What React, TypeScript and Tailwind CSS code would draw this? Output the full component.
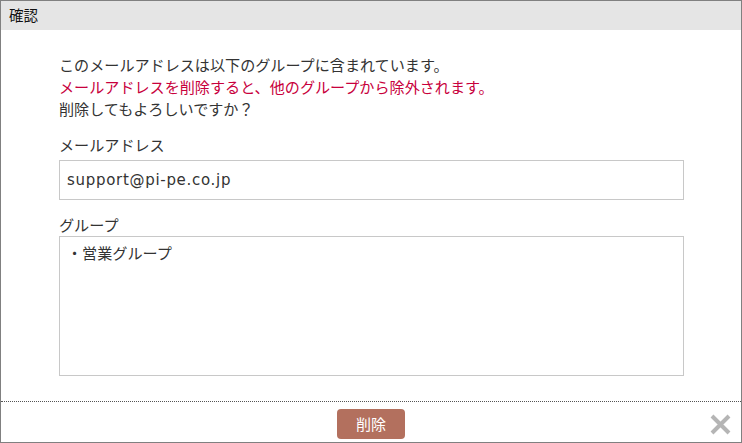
import React from "react";

export default function App() {
  return (
    <div
      className="w-[742px] h-[443px] bg-white border border-[#808080] flex flex-col text-[#333333] overflow-hidden"
      style={{ fontFamily: '"Noto Sans", "Noto Sans CJK JP", sans-serif' }}
    >
      <div className="h-[29px] bg-[#e5e5e5] shrink-0 flex items-center pl-[8px] text-[14.5px] text-[#111111]">
        確認
      </div>
      <div className="flex-1 flex flex-col pl-[58px] pr-[57px] pt-[24px]">
        <div className="text-[15.1px] leading-[22px]">
          <p>このメールアドレスは以下のグループに含まれています。</p>
          <p className="text-[#c8003c]">メールアドレスを削除すると、他のグループから除外されます。</p>
          <p>削除してもよろしいですか？</p>
        </div>
        <div className="mt-[14px] text-[15.1px] leading-[22px]">メールアドレス</div>
        <div
          className="mt-[4px] h-[40px] border border-[#c8c8c8] flex items-center px-[7px] text-[15px] tracking-[0.7px]"
          style={{ fontFamily: '"DejaVu Sans", sans-serif' }}
        >
          support@pi-pe.co.jp
        </div>
        <div className="mt-[14px] text-[15.1px] leading-[22px]">グループ</div>
        <div className="h-[140px] border border-[#c8c8c8] px-[7px] pt-[5px] text-[15.1px] leading-[22px]">
          ・営業グループ
        </div>
      </div>
      <div className="h-[41px] shrink-0 border-t border-dotted border-[#555555] relative flex justify-center pt-[7px]">
        <button className="w-[68px] h-[30px] rounded-[4px] bg-[#b3705e] text-white text-[15px] flex items-center justify-center">
          削除
        </button>
        <svg
          className="absolute right-[10px] top-[12px]"
          width="21"
          height="21"
          viewBox="0 0 21 21"
        >
          <path d="M2 2 L19 19 M19 2 L2 19" stroke="#b5b5b5" strokeWidth="4" strokeLinecap="butt" />
        </svg>
      </div>
    </div>
  );
}
